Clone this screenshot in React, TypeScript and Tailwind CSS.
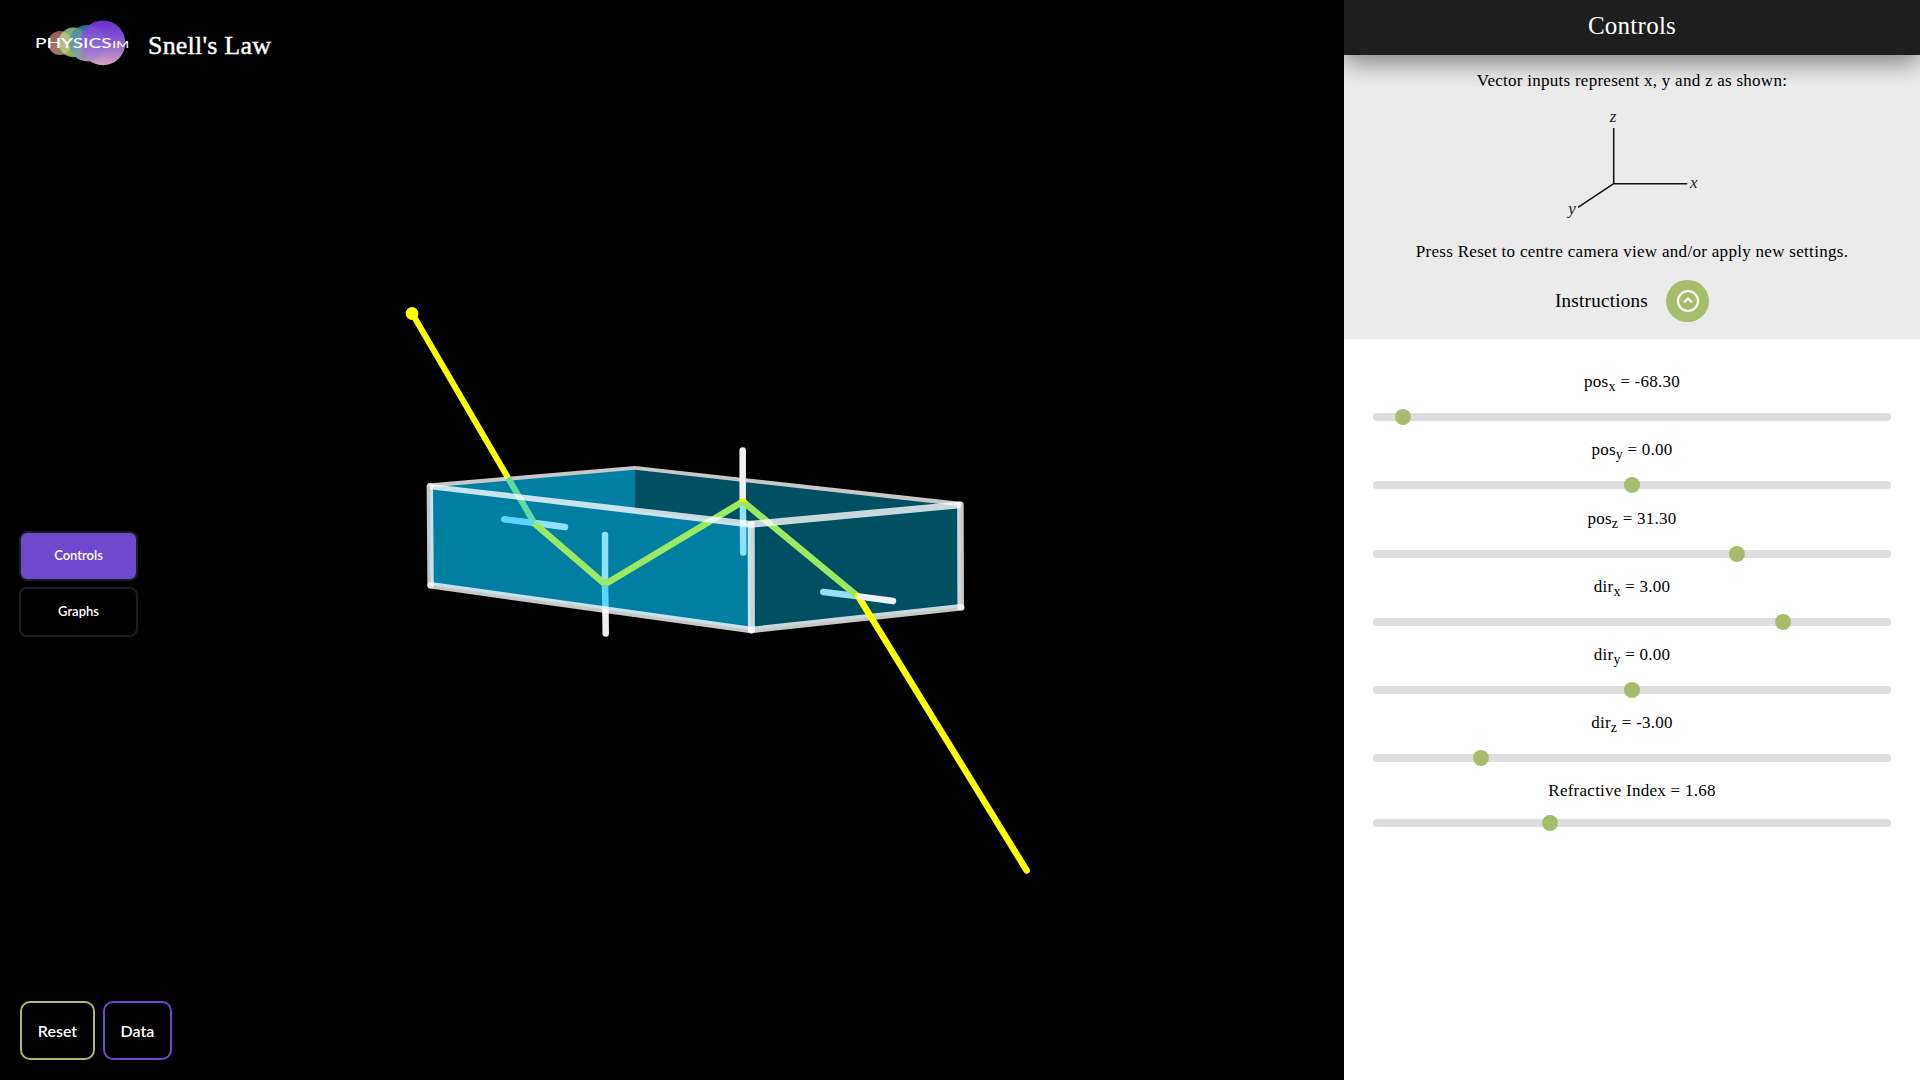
import type { ReactNode } from 'react';

type Slider = { name: string; sub?: string; value: string; position: number; spacing: string };

const sliders: Slider[] = [
  { name: 'pos', sub: 'x', value: '-68.30', position: 30, spacing: 'h-[68px]' },
  { name: 'pos', sub: 'y', value: '0.00', position: 259, spacing: 'h-[69px]' },
  { name: 'pos', sub: 'z', value: '31.30', position: 364, spacing: 'h-[68px]' },
  { name: 'dir', sub: 'x', value: '3.00', position: 410, spacing: 'h-[68px]' },
  { name: 'dir', sub: 'y', value: '0.00', position: 259, spacing: 'h-[68px]' },
  { name: 'dir', sub: 'z', value: '-3.00', position: 108, spacing: 'h-[65px]' },
  { name: 'Refractive Index', value: '1.68', position: 177, spacing: 'h-[68px]' },
];

function Logo() {
  return (
    <svg className="block h-[50px] w-[100px]" viewBox="33 18 100 50">
      <defs>
        <linearGradient id="red" x1="0" y1="0" x2="0" y2="1">
          <stop offset="0" stopColor="#a2545f" />
          <stop offset="1" stopColor="#a0806a" />
        </linearGradient>
        <linearGradient id="green" x1="0" y1="0" x2="0" y2="1">
          <stop offset="0" stopColor="#7aa878" />
          <stop offset="1" stopColor="#8db655" />
        </linearGradient>
        <linearGradient id="blue" x1="0" y1="0" x2="0" y2="1">
          <stop offset="0" stopColor="#1f6f96" />
          <stop offset="1" stopColor="#a897a6" />
        </linearGradient>
        <linearGradient id="purple" x1="0" y1="0" x2="0" y2="1">
          <stop offset="0" stopColor="#6a2ed0" />
          <stop offset="0.5" stopColor="#8a60d0" />
          <stop offset="1" stopColor="#d3a4bd" />
        </linearGradient>
        <clipPath id="greenClip">
          <circle cx="73.3" cy="42.3" r="14.7" />
        </clipPath>
        <clipPath id="blueClip">
          <circle cx="87.6" cy="43.2" r="18.3" />
        </clipPath>
        <clipPath id="purpleClip">
          <circle cx="103" cy="42.8" r="22.4" />
        </clipPath>
      </defs>
      <circle cx="60" cy="43" r="12" fill="url(#red)" />
      <circle cx="73.3" cy="42.3" r="14.7" fill="url(#green)" />
      <circle cx="60" cy="43" r="12" fill="#c8c98a" opacity="0.7" clipPath="url(#greenClip)" />
      <circle cx="87.6" cy="43.2" r="18.3" fill="url(#blue)" />
      <circle cx="73.3" cy="42.3" r="14.7" fill="#6fb3a4" opacity="0.45" clipPath="url(#blueClip)" />
      <circle cx="103" cy="42.8" r="22.4" fill="url(#purple)" />
      <circle cx="87.6" cy="43.2" r="17.5" fill="#7f6fe8" opacity="0.25" clipPath="url(#purpleClip)" />
      <g fill="#fff" fontFamily="Lato, sans-serif" fontWeight="500">
        <text x="35" y="47.6" fontSize="12.6" textLength="76.5" lengthAdjust="spacingAndGlyphs">PHYSICS</text>
        <text x="112.3" y="47.6" fontSize="9.8" textLength="16.8" lengthAdjust="spacingAndGlyphs">IM</text>
      </g>
    </svg>
  );
}

function Scene() {
  return (
    <svg className="absolute inset-0 h-[1080px] w-[1344px]" viewBox="0 0 1344 1080" fill="none">
      <polygon points="430,486.5 635,467.7 635,560 430.7,585.3" fill="#007fa3" />
      <polygon points="635,467.7 960.5,504.7 751.3,524.3 635,512" fill="#004f63" />
      <polygon points="430,486.5 751.3,524.3 751.3,630 430.7,585.3" fill="#007fa3" />
      <polygon points="751.3,524.3 960.5,504.7 961.3,607.3 751.3,630" fill="#004f63" />

      <polygon points="428,483.4 635,466 635,469.8 430,487.5" fill="#c8c8c8" />
      <polygon points="635,466 962,502 960.5,506.2 635,469.8" fill="#c8c8c8" />

      <line x1="412.2" y1="313.5" x2="508" y2="477.8" stroke="#ff0" strokeWidth="6" />
      <circle cx="412" cy="313.5" r="6.4" fill="#ff0" />
      <line x1="508" y1="477.8" x2="534" y2="522.6" stroke="#62dba3" strokeWidth="6.2" />

      <g strokeWidth="6.5" strokeLinecap="round">
        <line x1="504.3" y1="519.3" x2="532" y2="522.8" stroke="#58d7fb" />
        <line x1="537" y1="523.3" x2="565" y2="527" stroke="#91e1f7" />
        <line x1="605" y1="535" x2="605" y2="582" stroke="#91e1f7" />
        <line x1="742.7" y1="450.5" x2="742.7" y2="502" stroke="#f0f0f0" />
        <line x1="605.5" y1="614" x2="605.7" y2="633.5" stroke="#f0f0f0" />
        <line x1="823.3" y1="592" x2="856" y2="596" stroke="#91e1f7" />
      </g>
      <line x1="605" y1="584" x2="605.5" y2="609.5" stroke="#58d7fb" strokeWidth="6.5" />
      <path d="M605.5 609v5" stroke="#f0f0f0" strokeWidth="6.5" />
      <line x1="743" y1="512" x2="743.2" y2="552.5" stroke="#91e1f7" strokeWidth="6.5" strokeLinecap="round" />
      <line x1="743" y1="503" x2="743" y2="512" stroke="#91e1f7" strokeWidth="6.5" />

      <polyline
        points="534,523 605,584.3 742.9,501.5 856.7,595.5"
        stroke="#9be963"
        strokeWidth="6.5"
        strokeLinejoin="round"
      />
      <path d="M738.3 501.8 741 498.5h4L748 501.8Z" fill="#ff0" />
      <path d="M601.5 585h7.5l-1.5 2.5h-4.5Z" fill="#62dba3" />

      <g stroke="#fff" strokeOpacity="0.784" strokeLinecap="round">
        <polygon
          points="430,483.9 751.8,521 751.3,527.8 430,489.2"
          fill="#fff"
          fillOpacity="0.784"
          stroke="none"
        />
        <polygon
          points="751.3,520.8 960.5,501.4 960.5,508.2 751.3,527.8"
          fill="#fff"
          fillOpacity="0.784"
          stroke="none"
        />
        <line x1="430.7" y1="585.3" x2="751.3" y2="630" strokeWidth="6.6" />
        <line x1="751.3" y1="630" x2="961.3" y2="607.3" strokeWidth="6.4" />
        <line x1="429.8" y1="486.5" x2="430.6" y2="585.3" strokeWidth="6.4" />
        <line x1="751.2" y1="524.3" x2="751.4" y2="630" strokeWidth="7" />
        <line x1="960.4" y1="504.7" x2="960.7" y2="607.3" strokeWidth="6.6" />
      </g>

      <line x1="858" y1="596" x2="1026.7" y2="870.5" stroke="#ff0" strokeWidth="6.4" strokeLinecap="round" />
      <line x1="860.5" y1="596.7" x2="893" y2="601" stroke="#f0f0f0" strokeWidth="6.4" strokeLinecap="round" />
    </svg>
  );
}

function TabButton({ active, children }: { active?: boolean; children: ReactNode }) {
  const colour = active ? 'bg-[#6e48cd]' : 'bg-black';
  return (
    <button
      className={`${colour} h-[50px] w-[119px] rounded-lg border-2 border-[#1e1e1e] font-[Lato,sans-serif] text-[13px] font-semibold text-white`}
    >
      {children}
    </button>
  );
}

function Axes() {
  return (
    <svg className="block h-[120px] w-[150px]" viewBox="0 0 150 120">
      <path d="M53.7 23v55.7h73.6M53.7 78.7 18 102.3" fill="none" stroke="#111" strokeWidth="1.5" />
      <g className="font-['Liberation_Serif',serif] italic" fontSize="17" fill="#222">
        <text x="49.8" y="16.5">z</text>
        <text x="130" y="83">x</text>
        <text x="8.3" y="108.5">y</text>
      </g>
    </svg>
  );
}

function SliderRow({ name, sub, value, position, spacing }: Slider) {
  return (
    <div className={`${spacing} flex flex-col items-center`}>
      <p className={`${sub ? 'leading-[17px]' : 'leading-[23px]'} h-[25px] text-[17px] tracking-[0.25px]`}>
        {name}
        {sub && <sub className="text-[14px] leading-none">{sub}</sub>} = {value}
      </p>
      <div className="mt-[15px] flex h-2 w-[518px] items-center rounded-full bg-[#ddd]">
        <span
          className="size-4 shrink-0 rounded-full bg-[#a6bd6e]"
          style={{ marginLeft: position - 8 }}
        />
      </div>
    </div>
  );
}

export default function App() {
  return (
    <div className="flex h-[1080px] w-[1920px] overflow-hidden bg-black font-['Liberation_Serif',serif]">
      <main className="relative flex w-[1344px] flex-col justify-between pb-5 pl-5">
        <Scene />
        <header className="relative flex h-[50px] items-center pt-[36px] pl-[13px]">
          <Logo />
          <h1 className="ml-[15px] pt-1.5 text-[26px] leading-none tracking-[0.2px] text-white [-webkit-text-stroke:0.4px_white]">
            Snell's Law
          </h1>
        </header>
        <nav className="relative mt-[117px] -ml-px flex flex-col items-start gap-1.5">
          <TabButton active>Controls</TabButton>
          <TabButton>Graphs</TabButton>
        </nav>
        <footer className="relative flex gap-2 font-[Lato,sans-serif] text-base font-semibold text-white">
          <button className="h-[59px] w-[75px] rounded-[10px] border-2 border-[#a6bd6e]">Reset</button>
          <button className="h-[59px] w-[69px] rounded-[10px] border-2 border-[#6e48cd]">Data</button>
        </footer>
      </main>

      <aside className="flex w-[576px] flex-col bg-white text-black">
        <h2 className="relative z-10 flex h-[55px] shrink-0 items-center justify-center bg-[#1e1e1e] pb-1 text-[25px] tracking-[0.25px] text-white shadow-[0_8px_24px_rgba(0,0,0,0.45)]">
          Controls
        </h2>
        <section className="flex h-[284px] shrink-0 flex-col items-center bg-[#ebebeb] pt-[14px]">
          <p className="text-[17px] leading-6 tracking-[0.26px]">Vector inputs represent x, y and z as shown:</p>
          <div className="mt-3 mr-[-6px]">
            <Axes />
          </div>
          <p className="mt-[15px] text-[17px] leading-6 tracking-[0.3px]">
            Press Reset to centre camera view and/or apply new settings.
          </p>
          <div className="mt-4 flex items-center gap-[18px]">
            <span className="text-[19px] leading-7 tracking-[0.28px]">Instructions</span>
            <button className="flex h-[42px] w-[43px] items-center justify-center rounded-full bg-[#a6bd6e]">
              <svg className="size-6" viewBox="0 0 24 24" fill="none" stroke="#fff" strokeWidth="2">
                <circle cx="12" cy="12" r="10" />
                <path d="M8 13.4 12 9.6l4 3.8" strokeWidth="2.2" />
              </svg>
            </button>
          </div>
        </section>
        <section className="pt-[34px]">
          {sliders.map((s) => (
            <SliderRow key={s.name + (s.sub ?? '')} {...s} />
          ))}
        </section>
      </aside>
    </div>
  );
}
